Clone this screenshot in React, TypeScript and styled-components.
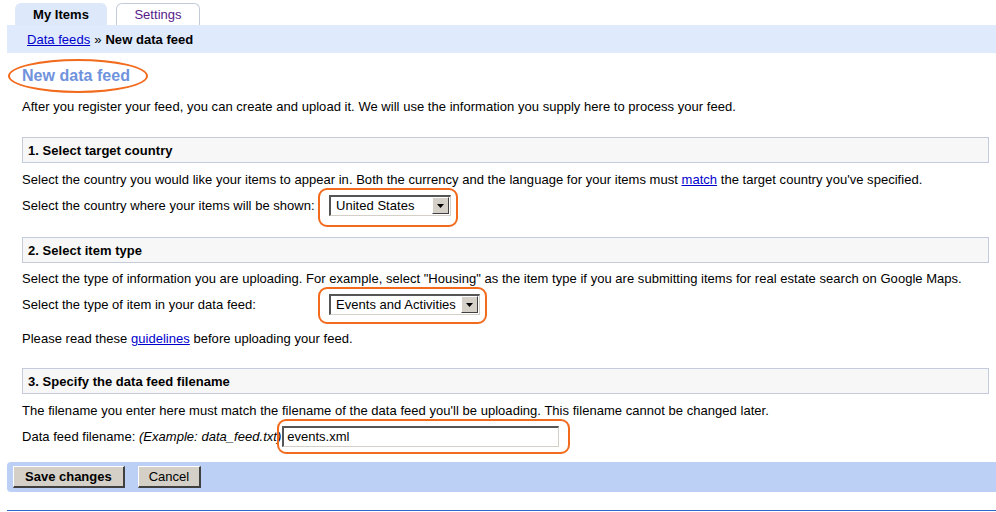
import styled, { createGlobalStyle } from "styled-components";

const GlobalStyle = createGlobalStyle`
    html, body { margin: 0; padding: 0; background: #ffffff; }
    body {
        font-family: Arial, "Liberation Sans", sans-serif;
        font-size: 13px;
        color: #000000;
        letter-spacing: 0.03px;
    }
`

const Page = styled.div`
    width: 996px;
    height: 512px;
    overflow: hidden;
`

const TabRow = styled.div`
    display: flex;
    gap: 9px;
    padding: 3px 0 0 15px;
    height: 22px;
`
const Tab = styled.div<{ $active?: boolean }>`
    box-sizing: border-box;
    height: 22px;
    width: ${p => p.$active ? '92px' : '84px'};
    display: flex;
    align-items: center;
    justify-content: center;
    border-radius: 6px 6px 0 0;
    font-weight: ${p => p.$active ? 'bold' : 'normal'};
    color: ${p => p.$active ? '#000000' : '#551a8b'};
    background: ${p => p.$active ? '#dde8fb' : '#ffffff'};
    border: ${p => p.$active ? '0' : '1px solid #c3cad8'};
    border-bottom: 0;
    cursor: ${p => p.$active ? 'default' : 'pointer'};
`

const Crumbs = styled.div`
    margin-left: 7px;
    height: 28px;
    background: #dfeafd;
    display: flex;
    align-items: center;
    padding-left: 20px;
    gap: 4px;
    > b{ font-weight: bold; }
`
const Link = styled.a`
    color: #0000cc;
    text-decoration: underline;
    cursor: pointer;
`

const Content = styled.div`
    padding: 0 7px 0 22px;
`

const Title = styled.h1`
    position: relative;
    display: inline-block;
    margin: 13px 0 0 0;
    font-size: 16px;
    line-height: 20px;
    font-weight: bold;
    color: #6f93dc;
    &::after{
        content: '';
        position: absolute;
        left: -14px;
        right: -18px;
        top: -7px;
        bottom: -7px;
        border: 2px solid #f26b1d;
        border-radius: 50%;
    }
`

const Intro = styled.p`
    margin: 13px 0 0 0;
    line-height: 16px;
`

const Section = styled.section<{ $gap: number }>`
    margin-top: ${p => p.$gap}px;
`
const SectionHead = styled.div`
    box-sizing: border-box;
    height: 26px;
    background: #f7f7f7;
    border: 1px solid #c3cbdc;
    display: flex;
    align-items: center;
    padding-left: 5px;
    font-weight: bold;
`
const Desc = styled.p<{ $gap?: number }>`
    margin: ${p => p.$gap ?? 9}px 0 0 0;
    line-height: 16px;
`
const Row = styled.div`
    display: flex;
    align-items: center;
    margin-top: 7px;
    height: 20px;
`
const Label = styled.span<{ $w?: number }>`
    width: ${p => p.$w ? p.$w + 'px' : 'auto'};
    flex-shrink: 0;
    > i{ font-style: italic; }
`

const Marked = styled.span<{ $l: number, $r: number, $t: number, $b: number }>`
    position: relative;
    display: inline-flex;
    &::after{
        content: '';
        position: absolute;
        left: -${p => p.$l}px;
        right: -${p => p.$r}px;
        top: -${p => p.$t}px;
        bottom: -${p => p.$b}px;
        border: 2px solid #f26b1d;
        border-radius: 9px;
        pointer-events: none;
    }
`

const SelectBox = styled.div<{ $w: number }>`
    box-sizing: border-box;
    width: ${p => p.$w}px;
    height: 21px;
    display: flex;
    align-items: center;
    background: #ffffff;
    border-top: 2px solid #555555;
    border-left: 2px solid #555555;
    border-right: 1px solid #d4d0c8;
    border-bottom: 1px solid #d4d0c8;
    padding-left: 5px;
    > span{ flex: 1; white-space: nowrap; }
`
const DropButton = styled.div`
    box-sizing: border-box;
    width: 17px;
    height: 17px;
    margin-right: 1px;
    background: #d4d0c8;
    border-top: 1px solid #ffffff;
    border-left: 1px solid #ffffff;
    border-right: 1px solid #404040;
    border-bottom: 1px solid #404040;
    display: flex;
    align-items: center;
    justify-content: center;
`

const TextInput = styled.input`
    box-sizing: border-box;
    width: 277px;
    height: 21px;
    margin-left: 1px;
    padding: 0 3px;
    font: inherit;
    color: #000000;
    border-top: 2px solid #555555;
    border-left: 2px solid #555555;
    border-right: 1px solid #d4d0c8;
    border-bottom: 1px solid #d4d0c8;
    outline: none;
`

const ButtonBar = styled.div`
    margin: 16px 0 0 7px;
    height: 30px;
    background: #bccff5;
    border-radius: 4px 0 0 4px;
    display: flex;
    align-items: center;
    gap: 13px;
    padding-left: 6px;
`
const Button = styled.button<{ $primary?: boolean }>`
    box-sizing: border-box;
    height: 22px;
    padding: 0 ${p => p.$primary ? '11px' : '10px'};
    font-family: Arial, "Liberation Sans", sans-serif;
    font-size: 13px;
    font-weight: ${p => p.$primary ? 'bold' : 'normal'};
    color: #000000;
    background: #d4d0c8;
    border-top: 1px solid #ffffff;
    border-left: 1px solid #ffffff;
    border-right: 2px solid #404040;
    border-bottom: 2px solid #404040;
    cursor: pointer;
`

const BottomRule = styled.div`
    margin: 18px 0 0 7px;
    height: 1px;
    background: #3366cc;
`

const Arrow = () => (
    <svg width="7" height="4" viewBox="0 0 7 4">
        <path d="M0 0 H7 L3.5 4 Z" fill="#000000" />
    </svg>
)

const FakeSelect = ({ value, width }: { value: string, width: number }) => (
    <SelectBox $w={width}>
        <span>{value}</span>
        <DropButton><Arrow /></DropButton>
    </SelectBox>
)

export default function App() {
    return <Page>
        <GlobalStyle />
        <TabRow>
            <Tab $active>My Items</Tab>
            <Tab>Settings</Tab>
        </TabRow>
        <Crumbs>
            <Link>Data feeds</Link>
            <span>»</span>
            <b>New data feed</b>
        </Crumbs>
        <Content>
            <Title>New data feed</Title>
            <Intro>After you register your feed, you can create and upload it. We will use the information you supply here to process your feed.</Intro>

            <Section $gap={22}>
                <SectionHead>1. Select target country</SectionHead>
                <Desc>Select the country you would like your items to appear in. Both the currency and the language for your items must <Link>match</Link> the target country you've specified.</Desc>
                <Row>
                    <Label $w={307}>Select the country where your items will be shown:</Label>
                    <Marked $l={11} $r={7} $t={7} $b={11}>
                        <FakeSelect value="United States" width={122} />
                    </Marked>
                </Row>
            </Section>

            <Section $gap={22}>
                <SectionHead>2. Select item type</SectionHead>
                <Desc $gap={8}>Select the type of information you are uploading. For example, select "Housing" as the item type if you are submitting items for real estate search on Google Maps.</Desc>
                <Row>
                    <Label $w={307}>Select the type of item in your data feed:</Label>
                    <Marked $l={11} $r={7} $t={7} $b={9}>
                        <FakeSelect value="Events and Activities" width={151} />
                    </Marked>
                </Row>
                <Desc $gap={17}>Please read these <Link>guidelines</Link> before uploading your feed.</Desc>
            </Section>

            <Section $gap={21}>
                <SectionHead>3. Specify the data feed filename</SectionHead>
                <Desc>The filename you enter here must match the filename of the data feed you'll be uploading. This filename cannot be changed later.</Desc>
                <Row>
                    <Label>Data feed filename: <i>(Example: data_feed.txt)</i></Label>
                    <Marked $l={4} $r={11} $t={7} $b={7}>
                        <TextInput defaultValue="events.xml" />
                    </Marked>
                </Row>
            </Section>
        </Content>
        <ButtonBar>
            <Button $primary>Save changes</Button>
            <Button>Cancel</Button>
        </ButtonBar>
        <BottomRule />
    </Page>
}
